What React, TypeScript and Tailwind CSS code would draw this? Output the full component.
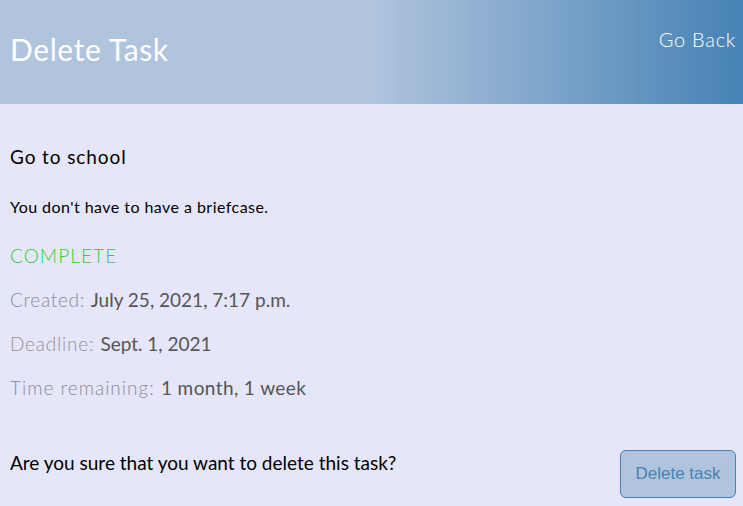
export default function App() {
  return (
    <main className="min-h-[506px] bg-[#e6e6fa] font-['Lato',sans-serif] text-black">
      <header className="flex h-[104px] items-start justify-between bg-[linear-gradient(to_right,#b0c4de_50%,#4682b4)] pl-[10px] pr-[7px] text-white">
        <h1 className="mt-[31px] text-[30px] leading-[36px] font-normal tracking-[0.6px]">Delete Task</h1>
        <a className="mt-[26px] text-[20px] leading-[26px] font-light tracking-[0.7px]">Go Back</a>
      </header>
      <section className="px-[10px] pt-[39px]">
        <h2 className="text-[19px] leading-[28px] tracking-[0.9px]">Go to school</h2>
        <p className="mt-[26px] text-[16px] leading-[20px] tracking-[0.45px]">You don't have to have a briefcase.</p>
        <p className="mt-[27px] text-[19px] leading-[24px] font-light tracking-[1.1px] text-[#32cd32]">COMPLETE</p>
        <p className="mt-[20px] text-[19px] leading-[24px] text-[#555]">
          <span className="font-light tracking-[0.7px] text-[#8a8a9a]">Created: </span>July 25, 2021, 7:17 p.m.
        </p>
        <p className="mt-[20px] text-[19px] leading-[24px] text-[#555]">
          <span className="font-light tracking-[0.8px] text-[#9a8f8a]">Deadline: </span>Sept. 1, 2021
        </p>
        <p className="mt-[20px] text-[19px] leading-[24px] text-[#555]">
          <span className="font-light tracking-[1px] text-[#8f8a96]">Time remaining: </span>
          <span className="tracking-[0.4px]">1 month, 1 week</span>
        </p>
        <div className="mt-[50px] flex items-start justify-between">
          <p className="mt-0 text-[19px] leading-[26px]">Are you sure that you want to delete this task?</p>
          <button className="mr-[-3px] h-[48px] w-[116px] rounded-[6px] border border-[#4682b4] bg-[#b0c4de] font-['Liberation_Sans',sans-serif] text-[17px] text-[#4682b4]">
            Delete task
          </button>
        </div>
      </section>
    </main>
  );
}
